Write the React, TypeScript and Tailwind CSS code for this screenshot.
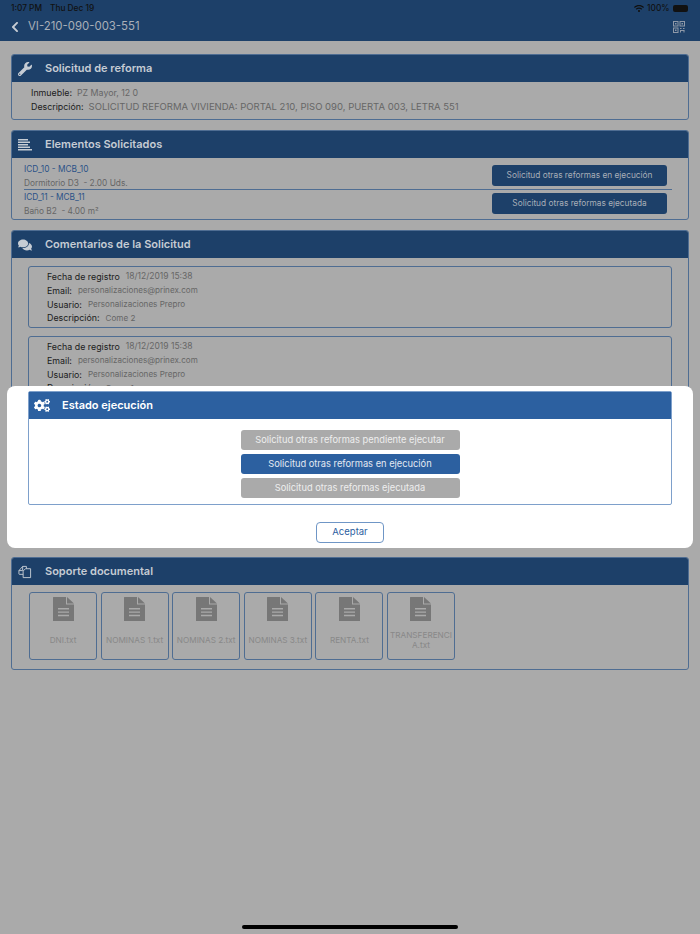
import type { ReactNode } from 'react';
import { FaChevronLeft, FaCogs, FaComments, FaWifi, FaWrench } from 'react-icons/fa';

function QrIcon() {
  return (
    <svg width="12" height="12" viewBox="0 0 12 12" fill="none" stroke="#8f99a8" strokeWidth="1">
      <rect x="0.5" y="0.5" width="4.5" height="4.5" />
      <rect x="7" y="0.5" width="4.5" height="4.5" />
      <rect x="0.5" y="7" width="4.5" height="4.5" />
      <path d="M7 7.5h1.5M10 7.5h1.5M7 9.5h4.5M7.5 9.5v2M11 9.5v2" />
      <path d="M2 2h1.5v1.5H2zM8.5 2H10v1.5H8.5zM2 8.5h1.5V10H2z" fill="#8f99a8" stroke="none" />
    </svg>
  );
}

function DocsIcon() {
  return (
    <svg width="15" height="14" viewBox="0 0 15 14" fill="none" stroke="#c6ccd4" strokeWidth="1" strokeLinejoin="round">
      <path d="M8 3.5H13.5V13H5.5V6Z" />
      <path d="M5.5 9.5H1.5Q1 9.5 1 9V5.5L5 1H9V3.5" />
      <path d="M5 1V5.5H1" />
    </svg>
  );
}

function ListIcon() {
  return (
    <svg width="14" height="12" viewBox="0 0 14 12" fill="#c6ccd4">
      <rect x="0" y="0" width="10" height="1.5" />
      <rect x="0" y="2.5" width="12" height="1.5" />
      <rect x="0" y="5" width="10" height="1.5" />
      <rect x="0" y="7.5" width="12" height="1.5" />
      <rect x="0" y="10" width="14" height="1.5" />
    </svg>
  );
}

function FileIcon() {
  return (
    <svg width="21" height="24" viewBox="0 0 21 24" className="shrink-0">
      <path d="M0.5 0H13V7.5H21V23.5a.5.5 0 0 1-.5.5H.5a.5.5 0 0 1-.5-.5V.5A.5.5 0 0 1 .5 0Z" fill="#777777" />
      <path d="M14 0L21 6.5H14Z" fill="#777777" />
      <path d="M5 11h11v1.4H5zM5 14.4h11v1.4H5zM5 17.8h11v1.4H5z" fill="#aaaaaa" />
    </svg>
  );
}

function Section({ icon, title, children, className }: { icon: ReactNode; title: string; children: ReactNode; className?: string }) {
  return (
    <section className={`overflow-hidden rounded-[3px] border border-[#4f6d92] ${className ?? ''}`}>
      <div className="flex h-[27px] items-center bg-[#1d4069] pl-[6px]">
        <span className="flex w-[14px] justify-center text-[#c6ccd4]">{icon}</span>
        <h2 className="ml-[13px] text-[11px] font-semibold text-[#c6ccd4]">{title}</h2>
      </div>
      {children}
    </section>
  );
}

function Field({ label, value, date }: { label: string; value: string; date?: boolean }) {
  return (
    <p className="flex h-[13.7px] items-center whitespace-nowrap">
      <span className="text-[8.85px] text-[#1c1c1c]">{label}</span>
      <span className={`ml-[6px] text-[#666] ${date ? 'text-[8.5px]' : 'text-[8.1px]'}`}>{value}</span>
    </p>
  );
}

function CommentCard({ desc }: { desc: string }) {
  return (
    <div className="h-[62px] rounded-[3px] border border-[#4f6d92] pl-[18px] pt-[3px]">
      <Field date label="Fecha de registro" value="18/12/2019 15:38" />
      <Field label="Email:" value="personalizaciones@prinex.com" />
      <Field label="Usuario:" value="Personalizaciones Prepro" />
      <Field label="Descripción:" value={desc} />
    </div>
  );
}

function OrderRow({ code, desc, action, children }: { code: string; desc: string; action: string; children?: ReactNode }) {
  return (
    <div className="relative flex h-[28px] items-center justify-between pl-[12px] pr-[21px]">
      <div>
        <p className="text-[8.3px] leading-[14px] text-[#2a5288]">{code}</p>
        <p className="whitespace-pre text-[8.3px] leading-[14px] text-[#666]">{desc}</p>
      </div>
      <button className="mb-[2px] flex h-[21px] w-[175px] items-center justify-center rounded-[3px] bg-[#1d4069] text-[8.3px] text-[#a9afb8]">
        {action}
      </button>
      {children}
    </div>
  );
}

const files = ['DNI.txt', 'NOMINAS 1.txt', 'NOMINAS 2.txt', 'NOMINAS 3.txt', 'RENTA.txt', 'TRANSFERENCIA.txt'];

const states = [
  { label: 'Solicitud otras reformas pendiente ejecutar', on: false },
  { label: 'Solicitud otras reformas en ejecución', on: true },
  { label: 'Solicitud otras reformas ejecutada', on: false },
];

export default function App() {
  return (
    <div className="relative h-[934px] w-[700px] overflow-hidden bg-[#aaaaaa] font-['Inter',sans-serif]">
      <header className="h-[41px] bg-[#1d4069]">
        <div className="flex h-[17px] items-center justify-between pl-[11px] pr-[12px] text-[8.3px] font-medium text-[#111]">
          <div className="flex gap-[8px]">
            <span>1:07 PM</span>
            <span>Thu Dec 19</span>
          </div>
          <div className="flex items-center gap-[3px]">
            <FaWifi className="h-[9px] w-[10px]" />
            <span>100%</span>
            <span className="ml-[0.5px] h-[7px] w-[15px] rounded-[2px] bg-[#111]" />
          </div>
        </div>
        <div className="flex h-[20px] items-center justify-between pl-[10px] pr-[15px]">
          <div className="flex items-center gap-[8px] text-[#c6ccd4]">
            <FaChevronLeft className="h-[12px] w-[10px]" />
            <span className="text-[11.4px] text-[#a9afb8]">VI-210-090-003-551</span>
          </div>
          <QrIcon />
        </div>
      </header>

      <main className="flex flex-col px-[11px] pt-[13px]">
        <Section icon={<FaWrench className="h-[14px] w-[14px]" />} title="Solicitud de reforma" className="h-[66px]">
          <div className="pl-[19px] pt-[4px]">
            <p className="flex h-[14px] items-center">
              <span className="text-[8.85px] text-[#1c1c1c]">Inmueble:</span>
              <span className="ml-[5px] text-[8.8px] text-[#666]">PZ Mayor, 12 0</span>
            </p>
            <p className="flex h-[14px] items-center whitespace-nowrap">
              <span className="text-[8.85px] text-[#1c1c1c]">Descripción:</span>
              <span className="ml-[5px] text-[9.5px] text-[#666]">SOLICITUD REFORMA VIVIENDA: PORTAL 210, PISO 090, PUERTA 003, LETRA 551</span>
            </p>
          </div>
        </Section>

        <Section icon={<ListIcon />} title="Elementos Solicitados" className="mt-[10px] h-[90px]">
          <div className="pt-[4px]">
            <OrderRow code="ICD_10 - MCB_10" desc="Dormitorio D3  - 2.00 Uds." action="Solicitud otras reformas en ejecución">
              <span className="absolute bottom-0 left-[12px] right-[16px] h-px bg-[#4f6d92]" />
            </OrderRow>
            <OrderRow code="ICD_11 - MCB_11" desc="Baño B2  - 4.00 m²" action="Solicitud otras reformas ejecutada" />
          </div>
        </Section>

        <Section icon={<FaComments className="h-[14px] w-[14px]" />} title="Comentarios de la Solicitud" className="mt-[10px] h-[317px]">
          <div className="flex flex-col gap-[8px] px-[16px] pt-[8px]">
            <CommentCard desc="Come 2" />
            <CommentCard desc="Come 1" />
          </div>
        </Section>

        <Section icon={<DocsIcon />} title="Soporte documental" className="mt-[10px] h-[113px]">
          <div className="flex gap-[3.6px] pl-[17px] pt-[7px]">
            {files.map((name) => (
              <div key={name} className="flex h-[68px] w-[68px] flex-col items-center rounded-[3px] border border-[#4f6d92] pt-[4px]">
                <FileIcon />
                <div className="flex h-[38px] w-full items-center justify-center">
                  <p className="break-all px-[1px] text-center text-[8.2px] leading-[10px] text-[#888]">{name}</p>
                </div>
              </div>
            ))}
          </div>
        </Section>
      </main>

      {/* modal sits over the page */}
      <div className="absolute left-[7px] top-[386px] h-[162px] w-[686px] rounded-[8px] bg-white px-[21px] pt-[5px]">
        <div className="h-[114px] rounded-[2px] border border-[#7ea0cb]">
          <div className="flex h-[27px] items-center bg-[#2c60a0] pl-[5px] text-white">
            <FaCogs className="h-[15px] w-[16px]" />
            <h2 className="ml-[12px] text-[11px] font-semibold">Estado ejecución</h2>
          </div>
          <div className="flex flex-col items-center gap-[3.5px] pt-[10.5px]">
            {states.map((s) => (
              <button
                key={s.label}
                className={`flex h-[20.5px] w-[219px] items-center justify-center rounded-[3px] text-[9.3px] ${s.on ? 'bg-[#2c60a0] text-[#e3e9f2]' : 'bg-[#aaaaaa] text-[#eeeeee]'}`}
              >
                {s.label}
              </button>
            ))}
          </div>
        </div>
        <div className="flex justify-center pt-[17px]">
          <button className="flex h-[21px] w-[68px] items-center justify-center rounded-[4px] border border-[#6f96c6] text-[9.5px] text-[#2c60a0]">
            Aceptar
          </button>
        </div>
      </div>

      <div className="absolute bottom-[5px] left-[242px] h-[4px] w-[216px] rounded-full bg-black" />
    </div>
  );
}
